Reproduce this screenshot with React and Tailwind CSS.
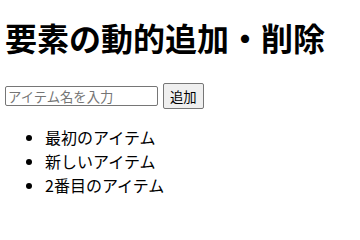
import React, { useState } from 'react';

export default function App() {
  const [items] = useState(['最初のアイテム', '新しいアイテム', '2番目のアイテム']);
  return (
    <div className="px-2 bg-white text-black font-['Noto_Sans_CJK_JP',sans-serif] leading-[normal]">
      <h1 className="text-[32px] leading-[32px] font-bold mt-[21px] mb-[30px] -ml-[3px]">要素の動的追加・削除</h1>
      <div className="flex items-center gap-[5px] -ml-[3px]">
        <input
          type="text"
          placeholder="アイテム名を入力"
          className="w-[153px] h-[20px] px-[2px] text-[13.33px] border border-[#767676] rounded-[2px] placeholder:text-[#757575] outline-none"
        />
        <button className="h-[26px] px-[6px] text-[13.33px] bg-[#efefef] border border-[#767676] rounded-[2px]">
          追加
        </button>
      </div>
      <ul className="list-disc pl-[37px] mt-[16px] text-[16px] leading-[24px]">
        {items.map((t, i) => (
          <li key={i}>{t}</li>
        ))}
      </ul>
    </div>
  );
}
